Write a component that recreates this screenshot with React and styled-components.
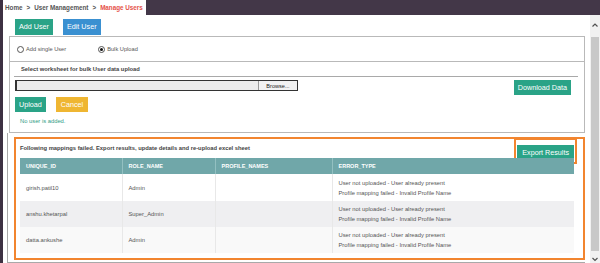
import React from "react";
import styled, { createGlobalStyle } from "styled-components";

const GlobalStyle = createGlobalStyle`
  html, body { margin: 0; padding: 0; background: #fff; }
  body { width: 600px; height: 263px; overflow: hidden; font-family: "Liberation Sans", Arial, sans-serif; color: #555; }
  * { box-sizing: border-box; }
`;

const Root = styled.div`
  display: flex;
  width: 600px;
  height: 263px;
  overflow: hidden;
`;

const LeftStrip = styled.div`
  width: 3px;
  background: #3d3142;
`;

const Column = styled.div`
  flex: 1;
  display: flex;
  flex-direction: column;
`;

const TopRow = styled.div`
  display: flex;
  height: 16px;
`;

const Crumbs = styled.div`
  flex: none;
  background: #fff;
  display: flex;
  align-items: center;
  padding: 0 3px 0 2px;
  font-size: 6.3px;
  font-weight: bold;
  color: #555;
  white-space: nowrap;
`;

const Sep = styled.span`
  margin: 0 4px;
`;

const Current = styled.span`
  color: #e5524a;
`;

const DarkFill = styled.div`
  flex: 1;
  background: #433748;
`;

const BodyRow = styled.div`
  flex: 1;
  display: flex;
`;

const Main = styled.div`
  flex: 1;
  display: flex;
  flex-direction: column;
`;

const ButtonRow = styled.div`
  display: flex;
  gap: ${(p) => p.$gap || 10}px;
  padding-left: ${(p) => p.$pl || 0}px;
  margin-top: ${(p) => p.$mt || 0}px;
  align-items: flex-start;
`;

const COLORS = {
  green: "#2aa387",
  blue: "#3a90d1",
  yellow: "#efb632",
};

const Btn = styled.button`
  height: ${(p) => p.$h || 15}px;
  padding: 0 ${(p) => p.$px || 4}px;
  border: none;
  border-radius: 0;
  background: ${(p) => COLORS[p.$color]};
  color: #fff;
  font-family: "Liberation Sans", Arial, sans-serif;
  font-size: 7.2px;
  line-height: ${(p) => p.$h || 15}px;
  white-space: nowrap;
  cursor: pointer;
`;

const RadioBox = styled.div`
  margin: 1px 5px 0 6px;
  height: 26px;
  border: 1px solid #b9b9b9;
  display: flex;
  align-items: center;
  padding-left: 7px;
  gap: 32px;
`;

const RadioLabel = styled.label`
  display: flex;
  align-items: center;
  gap: 2px;
  font-size: 5.7px;
  color: #555;
`;

const RadioDot = styled.span`
  width: 7px;
  height: 7px;
  border-radius: 50%;
  border: 1px solid #555;
  background: #fff;
  display: flex;
  align-items: center;
  justify-content: center;
  &::after {
    content: "";
    width: 3px;
    height: 3px;
    border-radius: 50%;
    background: ${(p) => (p.$checked ? "#111" : "transparent")};
  }
`;

const UploadBox = styled.div`
  margin: 0 5px 0 6px;
  height: 71px;
  border: 1px solid #b9b9b9;
  border-top: none;
  display: flex;
  flex-direction: column;
`;

const SectionTitle = styled.div`
  margin: 0 6px 0 4px;
  height: 15px;
  border-bottom: 1px solid #a9a9a9;
  padding-left: 7px;
  display: flex;
  align-items: center;
  font-size: 5.8px;
  font-weight: bold;
  color: #444;
`;

const FileRow = styled.div`
  display: flex;
  justify-content: space-between;
  align-items: flex-start;
  margin-top: 3px;
  padding: 0 13px 0 5px;
`;

const FileInput = styled.div`
  width: 283px;
  height: 11px;
  display: flex;
  border: 1px solid #333;
  border-left-width: 2px;
  background: #ececec;
`;

const FileField = styled.div`
  flex: 1;
`;

const Browse = styled.div`
  width: 39px;
  border-left: 1px solid #999;
  background: #f2f2f2;
  font-size: 5.6px;
  color: #222;
  display: flex;
  align-items: center;
  justify-content: center;
`;

const Message = styled.div`
  margin-top: 6px;
  padding-left: 10px;
  font-size: 5.8px;
  color: #2f9c85;
`;

const ResultsWrap = styled.div`
  margin: 0 5px 0 4px;
  flex: 1;
  border-left: 1px solid #a9a9a9;
  border-bottom: 1px solid #a9a9a9;
  padding: 4px 0 2px 6px;
  display: flex;
`;

const OrangeBox = styled.div`
  flex: 1;
  border: 2px solid #f2852f;
  padding: 0 9px 5px 4px;
  display: flex;
  flex-direction: column;
`;

const ResultHead = styled.div`
  display: flex;
  justify-content: space-between;
  align-items: flex-start;
  height: 19px;
`;

const ResultText = styled.div`
  font-size: 5.8px;
  font-weight: bold;
  color: #444;
  padding-top: 6px;
`;

const Outlined = styled.div`
  border: 2px solid #f2852f;
  padding: 1px;
  margin-top: -1px;
  margin-right: -3px;
  background: #fff;
`;

const Table = styled.table`
  width: 554px;
  border-collapse: collapse;
  table-layout: fixed;
  font-size: 5.8px;
  color: #555;
`;

const Th = styled.th`
  width: ${(p) => p.$w}px;
  height: 16px;
  background: #70a7a9;
  color: #fff;
  font-weight: bold;
  font-size: 5.5px;
  text-align: left;
  padding: 0 6px;
  border-left: 1px solid #93c0c1;
  &:first-child { border-left: none; }
`;

const Tr = styled.tr`
  background: ${(p) => p.$bg};
`;

const Td = styled.td`
  height: ${(p) => p.$h}px;
  padding: 0 6px;
  vertical-align: middle;
  border-left: 1px solid #e8e8e8;
  &:first-child { border-left: none; }
`;

const ErrLine = styled.div`
  line-height: 10px;
`;

const Scrollbar = styled.div`
  width: 10px;
  background: #f1f1f1;
  display: flex;
  flex-direction: column;
  align-items: center;
  padding-top: 6px;
`;

const Arrow = styled.svg`
  width: 8px;
  height: 8px;
  flex: none;
`;

const Thumb = styled.div`
  width: 8px;
  margin: 8px 0 4px;
  flex: 1;
  background: #c8c8c8;
`;

const rows = [
  { id: "girish.patil10", role: "Admin", bg: "#ffffff", h: 27 },
  { id: "anshu.khetarpal", role: "Super_Admin", bg: "#efeff1", h: 26 },
  { id: "datta.ankushe", role: "Admin", bg: "#f9f9f9", h: 26 },
];

export default function App() {
  return (
    <Root>
      <GlobalStyle />
      <LeftStrip />
      <Column>
        <TopRow>
          <Crumbs>
            Home<Sep>&gt;</Sep>User Management<Sep>&gt;</Sep>
            <Current>Manage Users</Current>
          </Crumbs>
          <DarkFill />
        </TopRow>
        <BodyRow>
          <Main>
            <ButtonRow $pl={12} $mt={4}>
              <Btn $color="green" $h={16}>Add User</Btn>
              <Btn $color="blue" $h={16}>Edit User</Btn>
            </ButtonRow>
            <RadioBox>
              <RadioLabel>
                <RadioDot />
                Add single User
              </RadioLabel>
              <RadioLabel>
                <RadioDot $checked />
                Bulk Upload
              </RadioLabel>
            </RadioBox>
            <UploadBox>
              <SectionTitle>Select worksheet for bulk User data upload</SectionTitle>
              <FileRow>
                <FileInput>
                  <FileField />
                  <Browse>Browse...</Browse>
                </FileInput>
                <Btn $color="green" $px={4}>Download Data</Btn>
              </FileRow>
              <ButtonRow $pl={5} $mt={2}>
                <Btn $color="green">Upload</Btn>
                <Btn $color="yellow" $px={5}>Cancel</Btn>
              </ButtonRow>
              <Message>No user is added.</Message>
            </UploadBox>
            <ResultsWrap>
              <OrangeBox>
                <ResultHead>
                  <ResultText>
                    Following mappings failed. Export results, update details and re-upload excel sheet
                  </ResultText>
                  <Outlined>
                    <Btn $color="green" $h={16} $px={5}>Export Results</Btn>
                  </Outlined>
                </ResultHead>
                <Table>
                  <thead>
                    <tr>
                      <Th $w={102}>UNIQUE_ID</Th>
                      <Th $w={93}>ROLE_NAME</Th>
                      <Th $w={117}>PROFILE_NAMES</Th>
                      <Th $w={242}>ERROR_TYPE</Th>
                    </tr>
                  </thead>
                  <tbody>
                    {rows.map((r) => (
                      <Tr key={r.id} $bg={r.bg}>
                        <Td $h={r.h}>{r.id}</Td>
                        <Td $h={r.h}>{r.role}</Td>
                        <Td $h={r.h}></Td>
                        <Td $h={r.h}>
                          <ErrLine>User not uploaded - User already present</ErrLine>
                          <ErrLine>Profile mapping failed - Invalid Profile Name</ErrLine>
                        </Td>
                      </Tr>
                    ))}
                  </tbody>
                </Table>
              </OrangeBox>
            </ResultsWrap>
          </Main>
          <Scrollbar>
            <Arrow viewBox="0 0 8 8">
              <path d="M1.5 5.5 L4 3 L6.5 5.5" fill="none" stroke="#505050" strokeWidth="1.2" />
            </Arrow>
            <Thumb />
            <Arrow viewBox="0 0 8 8">
              <path d="M1.5 3 L4 5.5 L6.5 3" fill="none" stroke="#505050" strokeWidth="1.2" />
            </Arrow>
          </Scrollbar>
        </BodyRow>
      </Column>
    </Root>
  );
}
